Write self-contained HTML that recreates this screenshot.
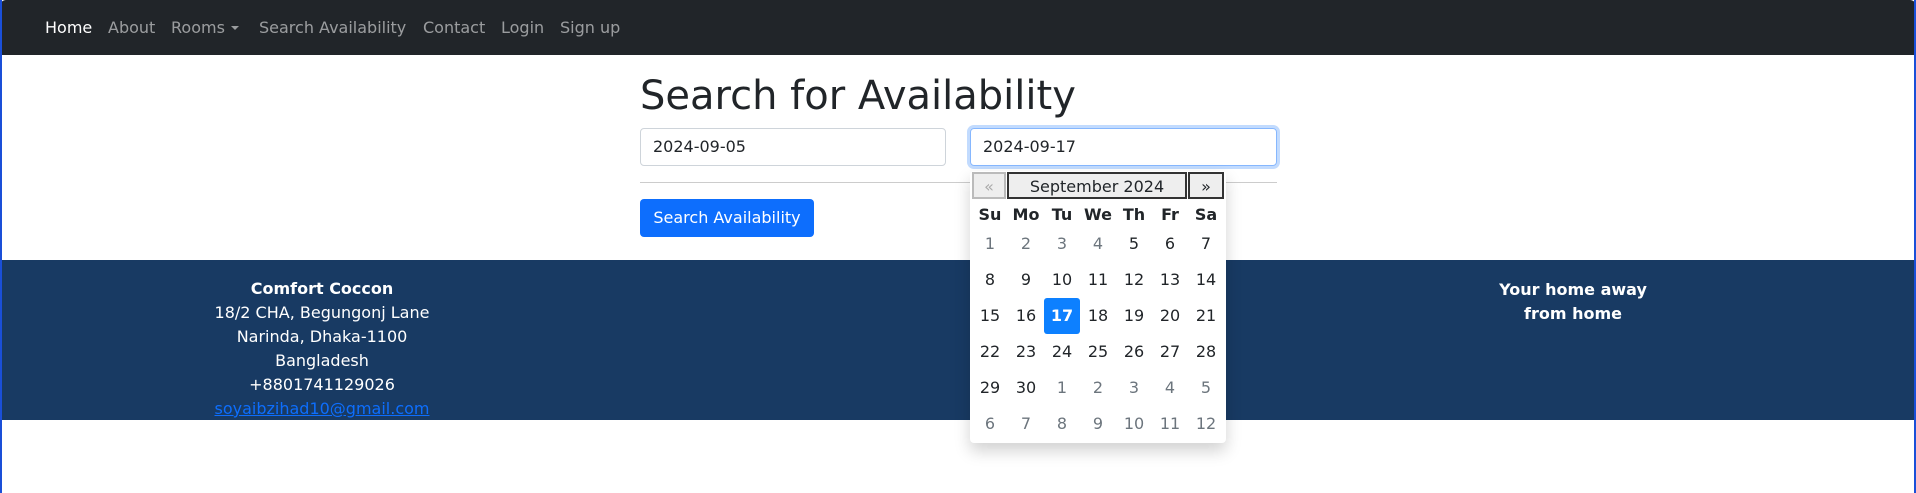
<!DOCTYPE html>
<html><head><meta charset="utf-8"><style>
*{box-sizing:border-box}
body{margin:0;width:1916px;height:493px;overflow:hidden;font-family:"DejaVu Sans","Liberation Sans",sans-serif;font-size:16px;color:#212529;background:#fff;position:relative}
.frame{position:absolute;left:0;top:0;width:1916px;height:493px;border-left:2px solid #1a4fd8;border-right:2px solid #1a4fd8}
nav{position:absolute;left:0;top:0;width:1916px;height:55px;background:#212529;border-radius:6px 6px 0 0}
nav span{position:absolute;top:18px;font-size:16px;color:rgba(255,255,255,.55);white-space:nowrap}
.caret{display:inline-block;width:0;height:0;border-left:4px solid transparent;border-right:4px solid transparent;border-top:4px solid rgba(255,255,255,.55);vertical-align:3px;margin-left:6px}
h1{position:absolute;left:640px;top:72px;margin:0;font-weight:400;font-size:40px;line-height:48px}
.in{position:absolute;top:128px;height:38px;border:1px solid #ced4da;border-radius:4px;padding:0 12px;line-height:36px;font-size:16px}
hr{position:absolute;left:640px;top:182px;width:637px;margin:0;border:0;border-top:1px solid #ccc}
.btn{position:absolute;left:640px;top:199px;width:174px;height:38px;background:#0d6efd;color:#fff;border-radius:4px;text-align:center;line-height:38px}
footer{position:absolute;left:2px;top:260px;width:1912px;height:160px;background:#183a63;color:#fff}
.c{position:absolute;text-align:center;line-height:24px;font-size:16px}
.dp{position:absolute;left:970px;top:171px;width:256px;height:272px;background:#fff;border-radius:4px;box-shadow:0 8px 16px rgba(0,0,0,.18)}
.hb{position:absolute;top:1px;height:27px;background:#eee;text-align:center;line-height:25px;font-size:16px;border:2px solid #333}
.g{position:absolute;width:36px;text-align:center;font-size:16px;line-height:36px}
.m{color:#6c757d}
.dh{font-weight:bold}
</style></head><body>
<nav>
<span style="left:45px;color:#fff">Home</span>
<span style="left:108px">About</span>
<span style="left:171px">Rooms<i class="caret"></i></span>
<span style="left:259px">Search Availability</span>
<span style="left:423px">Contact</span>
<span style="left:501px">Login</span>
<span style="left:560px">Sign up</span>
</nav>
<h1>Search for Availability</h1>
<div class="in" style="left:640px;width:306px">2024-09-05</div>
<div class="in" style="left:970px;width:307px;border-color:#86b7fe;box-shadow:0 0 0 3px rgba(13,110,253,.25)">2024-09-17</div>
<hr>
<div class="btn">Search Availability</div>
<footer>
<div class="c" style="left:160px;width:320px;top:17px"><b>Comfort Coccon</b><br>18/2 CHA, Begungonj Lane<br>Narinda, Dhaka-1100<br>Bangladesh<br>+8801741129026<br><a style="color:#0d6efd;text-decoration:underline">soyaibzihad10@gmail.com</a></div>
<div class="c" style="left:1471px;width:200px;top:18px"><b>Your home away<br>from home</b></div>
</footer>
<div class="dp">
<div class="hb" style="left:2px;width:34px;color:#aaa;border-color:#bbb">«</div>
<div class="hb" style="left:37px;width:180px">September 2024</div>
<div class="hb" style="left:218px;width:36px">»</div>
<div id="grid"></div>
</div>
<div class="frame"></div>
<script>
var g=document.getElementById('grid'),xs=[2,38,74,110,146,182,218],h='';
var hd=['Su','Mo','Tu','We','Th','Fr','Sa'];
for(var i=0;i<7;i++)h+='<div class="g dh" style="left:'+xs[i]+'px;top:26px">'+hd[i]+'</div>';
var d=[];for(var i=1;i<=4;i++)d.push([i,1]);for(var i=5;i<=30;i++)d.push([i,0]);for(var i=1;i<=12;i++)d.push([i,1]);
for(var k=0;k<42;k++){var r=Math.floor(k/7),c=k%7,t=55+r*36;var n=d[k];
if(n[0]==17&&!n[1])h+='<div class="g" style="left:'+xs[c]+'px;top:'+t+'px;height:36px;background:#0d80ff;color:#fff;font-weight:bold;border-radius:3px">17</div>';
else h+='<div class="g'+(n[1]?' m':'')+'" style="left:'+xs[c]+'px;top:'+t+'px">'+n[0]+'</div>';}
g.innerHTML=h;
</script>
</body></html>
